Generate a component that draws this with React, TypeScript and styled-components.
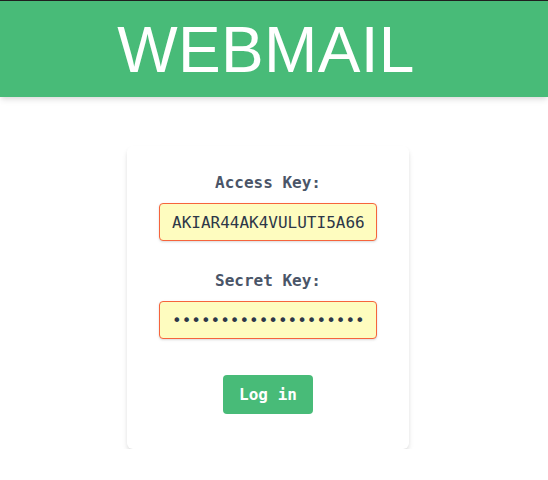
import React from "react";
import styled, { createGlobalStyle } from "styled-components";

const Global = createGlobalStyle`
  html, body { margin: 0; padding: 0; background: #ffffff; }
  body { font-family: "DejaVu Sans Mono", monospace; }
  * { box-sizing: border-box; }
`;

const Header = styled.header`
  background: #48bb78;
  border-top: 1px solid #1f1f1f;
  height: 97px;
  padding: 17px 16px 0 0;
  box-shadow: 0 4px 6px -1px rgba(0, 0, 0, 0.1), 0 2px 4px -1px rgba(0, 0, 0, 0.06);
  position: relative;
  z-index: 1;
`;

const Title = styled.h1`
  margin: 0;
  font-family: "Liberation Sans", Arial, sans-serif;
  font-weight: 400;
  font-size: 64px;
  line-height: 64px;
  letter-spacing: 0.3px;
  color: #ffffff;
  text-align: center;
`;

const Main = styled.main`
  display: flex;
  justify-content: center;
  padding-top: 49px;
  padding-right: 12px;
`;

const Card = styled.form`
  width: 282px;
  background: #ffffff;
  border-radius: 6px;
  box-shadow: 0 4px 6px -1px rgba(0, 0, 0, 0.12), 0 2px 4px -1px rgba(0, 0, 0, 0.07);
  padding: 25px 32px 35px;
  display: flex;
  flex-direction: column;
  align-items: center;
`;

const Field = styled.div`
  display: flex;
  flex-direction: column;
  align-items: center;
  width: 100%;
  margin-bottom: 28px;
`;

const Label = styled.label`
  font-family: "DejaVu Sans Mono", monospace;
  font-weight: 700;
  font-size: 16px;
  line-height: 24px;
  color: #4a5568;
  margin-bottom: 8px;
`;

const Input = styled.input`
  width: 218px;
  height: 38px;
  padding: 8px 12px;
  font-family: "DejaVu Sans Mono", monospace;
  font-size: 16px;
  line-height: 20px;
  color: #2d3748;
  background: #fefcbf;
  border: 1px solid #f6643c;
  border-radius: 4px;
  outline: none;
  box-shadow: 0 1px 3px 0 rgba(0, 0, 0, 0.1), 0 1px 2px 0 rgba(0, 0, 0, 0.06);
`;

const Button = styled.button`
  margin-top: 8px;
  height: 39px;
  background: #48bb78;
  color: #ffffff;
  border: none;
  border-radius: 4px;
  font-family: "DejaVu Sans Mono", monospace;
  font-weight: 700;
  font-size: 16px;
  line-height: 23px;
  padding: 8px 16px;
  cursor: pointer;
`;

export default function App() {
  return (
    <>
      <Global />
      <Header>
        <Title>WEBMAIL</Title>
      </Header>
      <Main>
        <Card onSubmit={(e) => e.preventDefault()}>
          <Field>
            <Label htmlFor="access">Access Key:</Label>
            <Input id="access" type="text" defaultValue="AKIAR44AK4VULUTI5A66" />
          </Field>
          <Field>
            <Label htmlFor="secret">Secret Key:</Label>
            <Input id="secret" type="password" defaultValue="abcdefghijklmnopqrst" />
          </Field>
          <Button type="submit">Log in</Button>
        </Card>
      </Main>
    </>
  );
}
